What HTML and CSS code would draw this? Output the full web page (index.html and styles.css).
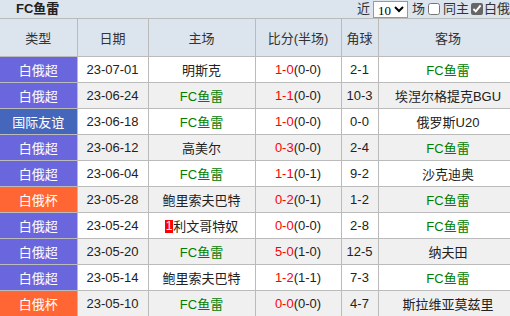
FILE: index.html
```html
<!DOCTYPE html>
<html lang="zh">
<head>
<meta charset="utf-8">
<link rel="stylesheet" href="styles.css">
</head>
<body>
<div class="page">
  <div class="topbar">
    <span class="title">FC鱼雷</span>
    <div class="controls">
      <span>近</span>
      <select class="sel"><option>10</option></select>
      <span>场</span>
      <input type="checkbox" class="cb">
      <span>同主</span>
      <input type="checkbox" class="cb on" checked>
      <span>白俄超</span>
    </div>
  </div>
  <table class="tbl">
    <colgroup>
      <col class="c1"><col class="c2"><col class="c3"><col class="c4"><col class="c5"><col class="c6">
    </colgroup>
    <thead>
      <tr><th>类型</th><th>日期</th><th>主场</th><th>比分(半场)</th><th>角球</th><th>客场</th></tr>
    </thead>
    <tbody>
      <tr><td class="t sup">白俄超</td><td>23-07-01</td><td>明斯克</td><td><span class="r">1-0</span>(0-0)</td><td>2-1</td><td class="g">FC鱼雷</td></tr>
      <tr class="alt"><td class="t sup">白俄超</td><td>23-06-24</td><td class="g">FC鱼雷</td><td><span class="r">1-1</span>(0-0)</td><td>10-3</td><td>埃涅尔格提克BGU</td></tr>
      <tr><td class="t intl">国际友谊</td><td>23-06-18</td><td class="g">FC鱼雷</td><td><span class="r">1-0</span>(0-0)</td><td>0-0</td><td>俄罗斯U20</td></tr>
      <tr class="alt"><td class="t sup">白俄超</td><td>23-06-12</td><td>高美尔</td><td><span class="r">0-3</span>(0-0)</td><td>2-4</td><td class="g">FC鱼雷</td></tr>
      <tr><td class="t sup">白俄超</td><td>23-06-04</td><td class="g">FC鱼雷</td><td><span class="r">1-1</span>(0-1)</td><td>9-2</td><td>沙克迪奥</td></tr>
      <tr class="alt"><td class="t cup">白俄杯</td><td>23-05-28</td><td>鲍里索夫巴特</td><td><span class="r">0-2</span>(0-1)</td><td>1-2</td><td class="g">FC鱼雷</td></tr>
      <tr><td class="t sup">白俄超</td><td>23-05-24</td><td><span class="badge">1</span>利文哥特奴</td><td><span class="r">0-0</span>(0-0)</td><td>2-8</td><td class="g">FC鱼雷</td></tr>
      <tr class="alt"><td class="t sup">白俄超</td><td>23-05-20</td><td class="g">FC鱼雷</td><td><span class="r">5-0</span>(1-0)</td><td>12-5</td><td>纳夫田</td></tr>
      <tr><td class="t sup">白俄超</td><td>23-05-14</td><td>鲍里索夫巴特</td><td><span class="r">1-2</span>(1-1)</td><td>7-3</td><td class="g">FC鱼雷</td></tr>
      <tr class="alt"><td class="t cup">白俄杯</td><td>23-05-10</td><td class="g">FC鱼雷</td><td><span class="r">0-0</span>(0-0)</td><td>4-7</td><td>斯拉维亚莫兹里</td></tr>
    </tbody>
  </table>
</div>
</body>
</html>
```

FILE: styles.css
```css
html, body {
  margin: 0;
  padding: 0;
  overflow: hidden;
}
body {
  font-family: "Liberation Sans", "Noto Sans CJK SC", sans-serif;
  font-size: 13px;
  color: #222;
  background: #fff;
}
.page {
  width: 530px;
}
.topbar {
  height: 18px;
  background: #dce4ee;
  display: flex;
  align-items: center;
  justify-content: space-between;
}
.title {
  font-weight: bold;
  padding-left: 16px;
  color: #222;
  line-height: 18px;
}
.controls {
  display: flex;
  align-items: center;
  gap: 3px;
  width: 173px;
  line-height: 18px;
  white-space: nowrap;
}
.controls span {
  color: #333;
}
.sel {
  font-family: "Liberation Serif", serif;
  font-size: 13px;
  height: 17px;
  width: 35px;
  padding: 0;
  margin: 0 1px 0 0;
  border: 1px solid #999;
  background: #fff;
  color: #000;
}
.cb {
  width: 12px;
  height: 12px;
  margin: 0;
}
.cb.on {
  accent-color: #666;
  margin-left: -1px;
  margin-right: -2px;
}
.tbl {
  border-collapse: collapse;
  table-layout: fixed;
  width: 518px;
}
.c1 { width: 77px; }
.c2 { width: 71px; }
.c3 { width: 107px; }
.c4 { width: 86px; }
.c5 { width: 37px; }
.c6 { width: 140px; }
.tbl th,
.tbl td {
  border: 1px solid #bbb;
  text-align: center;
  padding: 0;
  white-space: nowrap;
  overflow: hidden;
}
.tbl th {
  background: #dce4ee;
  font-weight: normal;
  height: 37px;
  color: #333;
}
.tbl tr > :first-child {
  border-left: none;
}
.tbl td {
  height: 25px;
  color: #222;
}
.tbl tr.alt td {
  background: #f0f0f0;
}
.tbl td.t {
  color: #fff;
}
.tbl tr td.sup { background: #6a66dd; }
.tbl tr td.intl { background: #4466bb; }
.tbl tr td.cup { background: #ff6633; }
.tbl td.g { color: #008000; }
.r { color: #ff0000; }
.badge {
  display: inline-block;
  background: #ff0000;
  color: #fff;
  font-size: 12px;
  line-height: 13px;
  padding: 0 1px;
  vertical-align: 1px;
}
```
